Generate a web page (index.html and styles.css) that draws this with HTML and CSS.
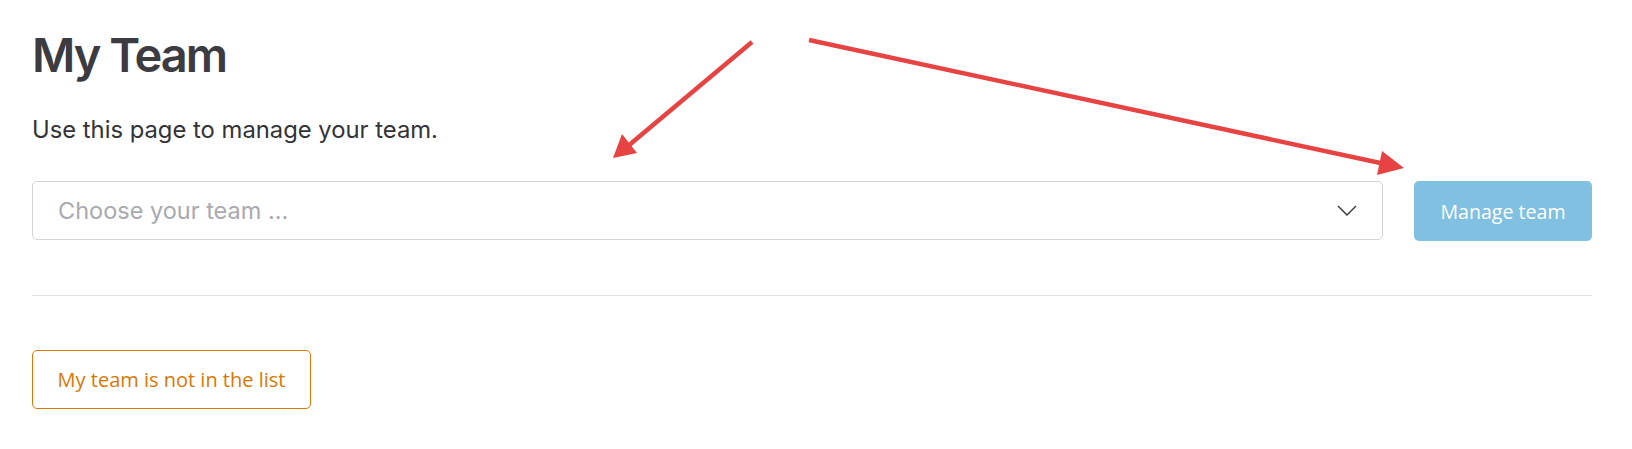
FILE: index.html
```html
<!DOCTYPE html>
<html lang="en">
<head>
<meta charset="utf-8">
<title>My Team</title>
<link rel="stylesheet" href="styles.css">
</head>
<body>
<main class="page">
  <h1 class="title">My Team</h1>
  <p class="lead">Use this page to manage your team.</p>
  <div class="picker-row">
    <div class="select">
      <span class="placeholder">Choose your team ...</span>
      <svg class="chevron" width="20" height="11" viewBox="0 0 20 11"><path d="M1 1 L10 10 L19 1" fill="none" stroke="#333" stroke-width="1.4"/></svg>
    </div>
    <button class="btn-manage" type="button">Manage team</button>
  </div>
  <hr class="divider">
  <button class="btn-outline" type="button">My team is not in the list</button>
</main>
<svg class="arrows" width="1632" height="449" viewBox="0 0 1632 449">
  <g stroke="#e84343" stroke-width="4.5" fill="#e84343" stroke-linecap="butt">
    <line x1="752" y1="42" x2="628" y2="146"/>
    <polygon points="613,158 622,134 637,153" stroke="none"/>
    <line x1="809" y1="40" x2="1385" y2="164"/>
    <polygon points="1404,168 1382,151 1377,175" stroke="none"/>
  </g>
</svg>
</body>
</html>
```

FILE: styles.css
```css
html, body {
  margin: 0;
  padding: 0;
  background: #ffffff;
}

body {
  font-family: Inter, "Liberation Sans", sans-serif;
  color: #333338;
  position: relative;
  width: 1632px;
  height: 449px;
  overflow: hidden;
}

.page {
  padding: 26px 40px 0 32px;
}

.title {
  margin: 0;
  font-size: 47px;
  line-height: 58px;
  font-weight: 600;
  color: #3b3b41;
  letter-spacing: -2px;
}

.lead {
  margin: 32px 0 0 0;
  font-size: 23.8px;
  line-height: 28px;
  color: #333338;
}

.picker-row {
  display: flex;
  gap: 31px;
  margin-top: 37px;
}

.select {
  flex: 1;
  height: 57px;
  border: 1px solid #d4d4d8;
  border-radius: 5px;
  display: flex;
  align-items: center;
  justify-content: space-between;
  padding: 0 25px 0 25px;
}

.placeholder {
  font-size: 23.5px;
  color: #a9a9b0;
}

.chevron {
  display: block;
}

.btn-manage {
  width: 178px;
  height: 60px;
  border: none;
  border-radius: 5px;
  background: #80c0e1;
  color: #ffffff;
  font-family: "Open Sans", "Noto Sans", sans-serif;
  font-size: 19.6px;
  padding: 0;
}

.divider {
  border: none;
  border-top: 1px solid #e2e2e4;
  margin: 54px 0 0 0;
  height: 0;
}

.btn-outline {
  margin-top: 54px;
  width: 279px;
  height: 59px;
  border: 1px solid #dc7a07;
  border-radius: 5px;
  background: #ffffff;
  color: #d97706;
  font-family: "Open Sans", "Noto Sans", sans-serif;
  font-size: 20px;
  padding: 0;
}

.arrows {
  position: absolute;
  left: 0;
  top: 0;
  pointer-events: none;
}
```
